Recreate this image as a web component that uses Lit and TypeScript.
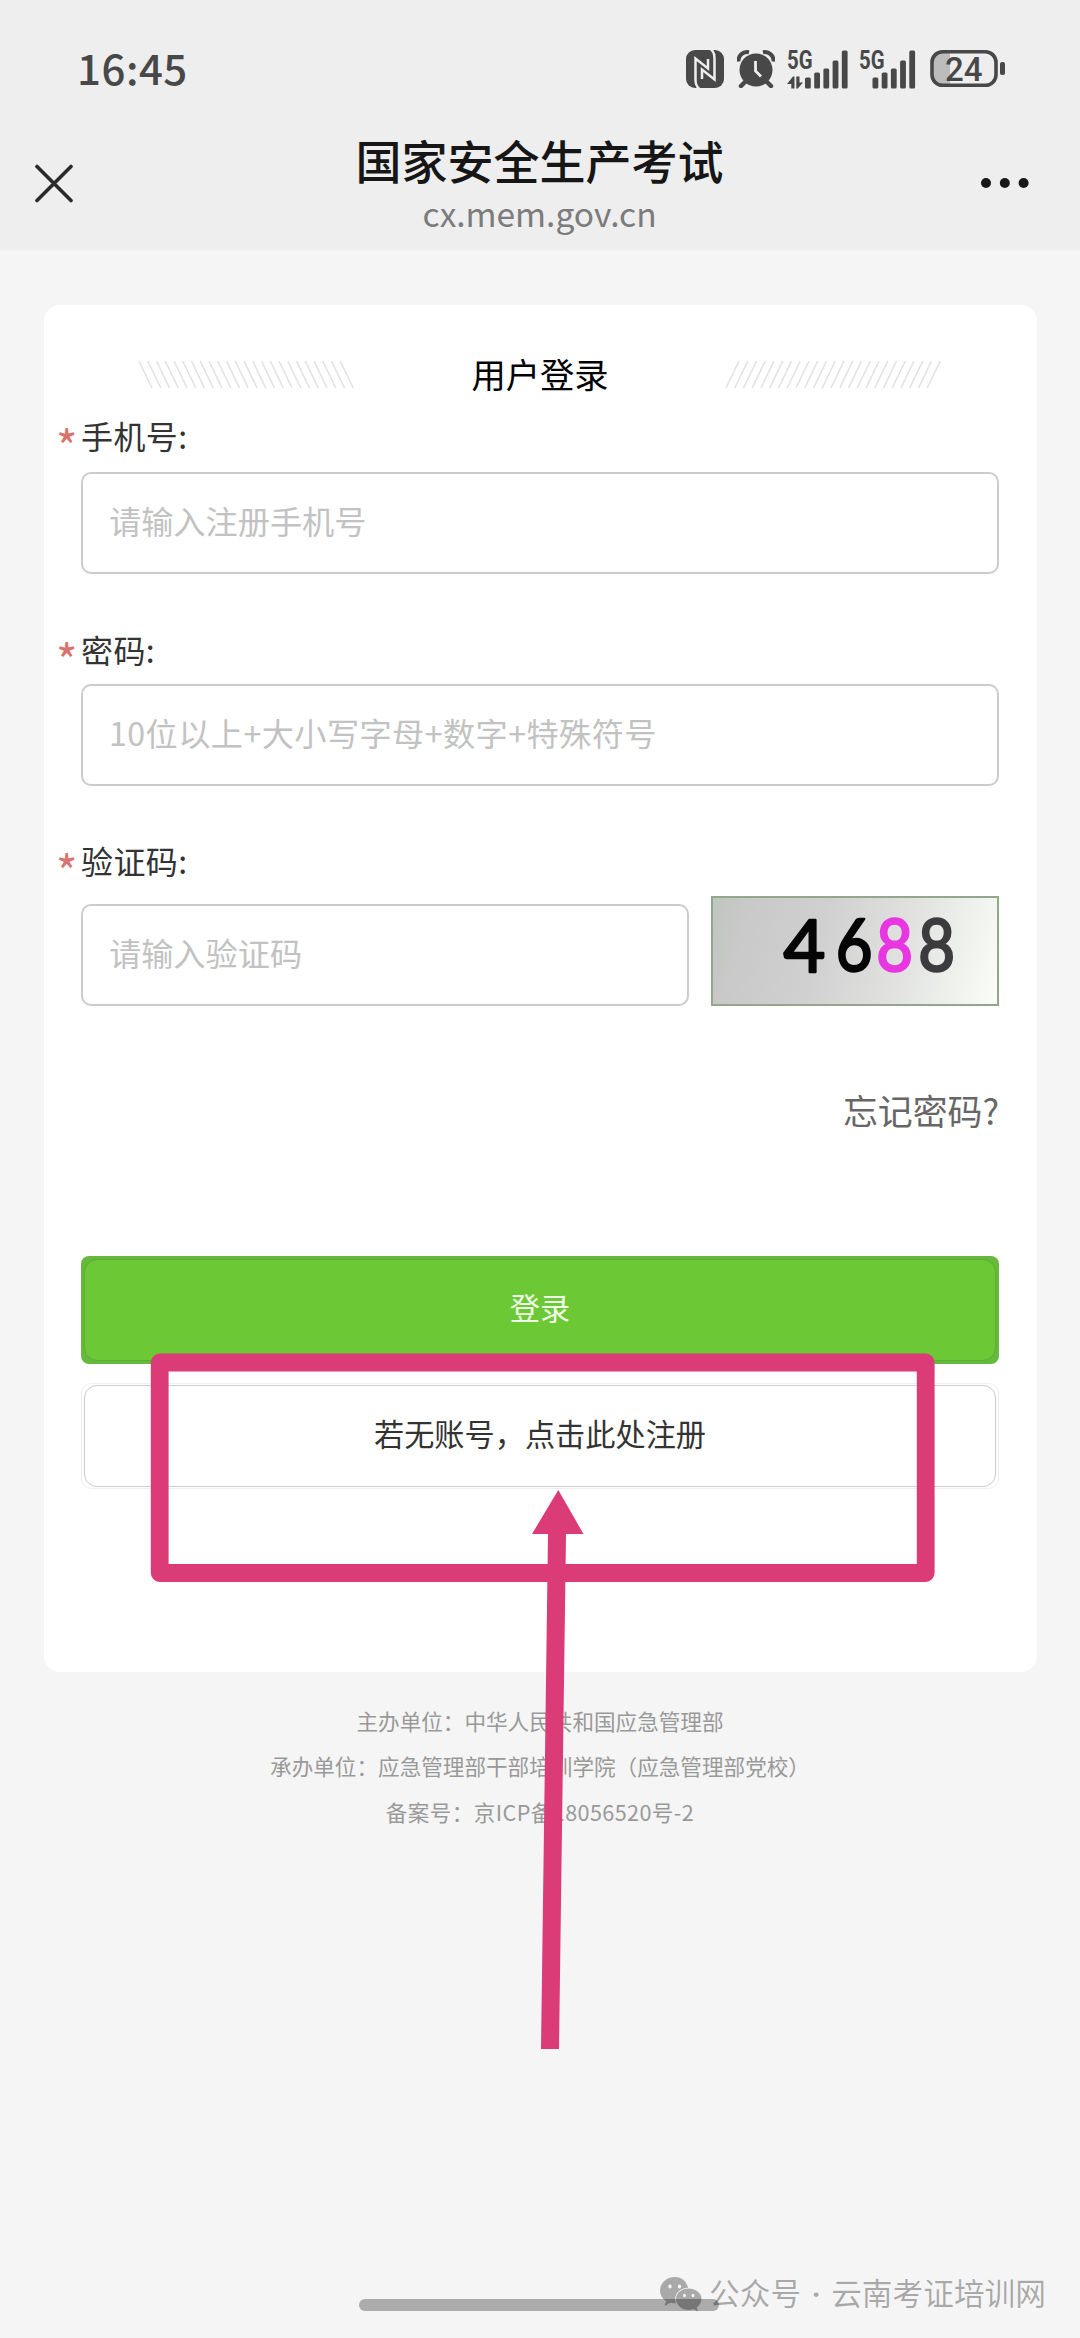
import { LitElement, html, css, svg } from "lit";
import { customElement, property } from "lit/decorators.js";

const BAR_TOPS = [27, 22, 18, 10, 0];

@customElement("signal-bars")
class SignalBars extends LitElement {
  @property({ type: Boolean }) traffic = false;

  static styles = css`
    :host { display: block; }
    .signal { display: block; overflow: visible; }
    .tag { font: 700 25px Roboto, sans-serif; fill: #484848; }
  `;

  render() {
    return html`<svg class="signal" width="62" height="40" viewBox="0 0 62 40" fill="#484848">
      <text class="tag" x="0" y="19" textLength="25.500" lengthAdjust="spacingAndGlyphs">5G</text>
      ${this.traffic
        ? svg`<path d="M0 34 6 26.500H7.500V38.500H4.300V34zM9.300 26.500h3.200V32.500H16L10.800 38.500H9.300z" />`
        : null}
      ${BAR_TOPS.map((top, i) => {
        const x = (this.traffic ? 18 : 13.5) + i * 9.2;
        return svg`<rect x=${x} y=${top + 0.5} width="5.800" height=${38 - top} rx="1.500" />`;
      })}
    </svg>`;
  }
}

@customElement("status-bar")
class StatusBar extends LitElement {
  static styles = css`
    :host { display: block; }
    .bar {
      display: flex; justify-content: space-between; align-items: flex-start;
      height: 100px; box-sizing: border-box; padding: 50px 74px 0 77px;
      font-family: "Noto Sans CJK SC", sans-serif; color: #484848;
    }
    .time { margin-top: -8px; font-size: 42px; font-weight: 500; line-height: 50px; letter-spacing: 0.5px; }
    .icons { display: flex; align-items: flex-start; }
    .nfc, .alarm, .battery { display: block; }
    .battery { overflow: visible; }
    .alarm { margin-left: 13px; }
    .sim { margin-left: 12px; }
    .sim2 { margin-left: 10px; }
    .battery { margin-left: 9px; }
    .level { font: 500 33px Roboto, sans-serif; fill: #484848; }
  `;

  render() {
    return html`<div class="bar">
      <span class="time">16:45</span>
      <div class="icons">
        <svg class="nfc" width="38" height="38" viewBox="0 0 38 38" fill="none">
          <rect width="38" height="38" rx="9" fill="#484848" />
          <path d="M13.500 39C10 36.500 9.500 34 9.500 30V8.500L22 18.500V9" stroke="#eee" stroke-width="2.500" />
          <path d="M24.500-1C28 1.500 28.500 4 28.500 8V29.500L16 19.500V29" stroke="#eee" stroke-width="2.500" />
        </svg>
        <svg class="alarm" width="38" height="38" viewBox="0 0 38 38" fill="none">
          <circle cx="19" cy="20" r="16.500" fill="#484848" />
          <path d="M1.500 11.500C1 6 6 1 12 2.200M36.500 11.500C37 6 32 1 26 2.200" stroke="#484848" stroke-width="4" />
          <path d="M8 32 4 36M30 32l4 4" stroke="#484848" stroke-width="4.500" stroke-linecap="round" />
          <path d="M18.500 11v10l5.500 5.500" stroke="#eee" stroke-width="2.800" />
        </svg>
        <signal-bars class="sim" traffic></signal-bars>
        <signal-bars class="sim2"></signal-bars>
        <svg class="battery" width="76" height="38" viewBox="0 0 76 38">
          <path d="M20 2H13A11 11 0 0 0 2 13V24A11 11 0 0 0 13 35H20z" fill="#bcbcbc" />
          <rect x="2" y="1.800" width="64" height="33.500" rx="10.500" fill="none" stroke="#484848" stroke-width="3.600" />
          <rect x="70" y="12" width="5" height="13" rx="2" fill="#484848" />
          <text class="level" x="15" y="31">24</text>
        </svg>
      </div>
    </div>`;
  }
}

@customElement("form-label")
class FormLabel extends LitElement {
  @property() text = "";

  static styles = css`
    :host { display: block; }
    .label {
      display: flex; height: 40px; line-height: 40px; margin-left: -25px;
      font-family: "Noto Sans CJK SC", sans-serif; font-size: 32px; letter-spacing: 0.4px; color: #333;
    }
    .star { width: 25px; color: #d9736e; font-size: 46px; line-height: 61px; letter-spacing: 0; }
  `;

  render() {
    return html`<div class="label"><span class="star">*</span><span>${this.text}</span></div>`;
  }
}

@customElement("app-root")
class AppRoot extends LitElement {
  static styles = css`
    :host { display: block; }
    .screen {
      position: relative; box-sizing: border-box; width: 1080px; height: 2338px;
      overflow: hidden; background: #f5f5f5;
      font-family: "Noto Sans CJK SC", sans-serif;
    }
    .header { height: 250px; background: #eee; }
    .nav {
      display: grid; grid-template-columns: 38px 1fr 50px; height: 150px;
      padding: 0 49px 0 35px;
    }
    .close { margin-top: 64px; }
    .more { margin-top: 77px; }
    .titles { display: flex; flex-direction: column; align-items: center; padding-left: 25px; }
    .title { margin-top: 31px; font-size: 46px; line-height: 56px; font-weight: 500; color: #161616; }
    .domain { margin-top: 6px; font-size: 33.5px; line-height: 40px; color: #7b7b7b; }
    .card {
      box-sizing: border-box; height: 1367px; margin: 55px 43px 0 44px;
      padding: 38px 38px 0 37px; border-radius: 16px; background: #fff;
    }
    .heading {
      display: flex; align-items: center; justify-content: space-between;
      height: 60px; padding: 0 57px; margin-bottom: 12px;
    }
    .heading-text { font-size: 34.3px; line-height: 60px; color: #000; }
    .hatch { margin-top: 2px; }
    .field {
      box-sizing: border-box; height: 102px; padding: 0 26px; border: 2px solid #ccc;
      border-radius: 10px; font-size: 32.2px; line-height: 93px; color: #c2c2c2; white-space: nowrap;
    }
    .phone { margin: 17px 0 55px; }
    .password { margin: 15px 0 54px; letter-spacing: 0.42px; }
    .code-row {
      display: grid; grid-template-columns: 608px 288px; column-gap: 22px;
      align-items: end; margin-top: 16px;
    }
    .captcha {
      box-sizing: border-box; height: 110px; border: 2px solid #93a78c;
      background: linear-gradient(105deg, #c0c5be 0%, #c9c9c9 12%, #d0d0d0 38%, #e0e1df 64%, #fafdf8 100%);
    }
    .digits { display: block; font: 400 72px Lato, sans-serif; stroke-width: 2.5px; stroke-linejoin: round; }
    .forgot { margin-top: 84px; height: 40px; line-height: 40px; text-align: right; font-size: 34.9px; color: #666; }
    .button { box-sizing: border-box; display: flex; justify-content: center; font-size: 30.2px; }
    .button-inner {
      box-sizing: border-box; width: 100%; border: 1px solid #ccc; border-radius: 13px;
      text-align: center;
    }
    .login {
      height: 108px; margin-top: 126px; padding: 3px; border-radius: 8px;
      background: #66b93c; color: #f0fde6;
    }
    .login .button-inner { border-color: #5cad34; background: #6cc935; line-height: 94px; }
    .register {
      height: 106px; margin-top: 19px; padding: 1px 2px; border: 1px solid #efefef; border-radius: 10px;
      color: #333;
    }
    .register .button-inner { line-height: 95px; }
    .footer { margin-top: 26px; text-align: center; font-size: 21.6px; line-height: 45.3px; color: #999; }
    .icp { letter-spacing: 0.4px; }
    .markup { position: absolute; left: 0; top: 0; pointer-events: none; }
    .home {
      position: absolute; left: 359px; top: 2299px; width: 360px; height: 12px;
      border-radius: 6px; background: #acacac;
    }
    .account {
      position: absolute; right: 34px; top: 2270px; height: 44px; display: flex;
      align-items: flex-start; color: rgba(0, 0, 0, 0.31); font-size: 30.7px; line-height: 44px;
    }
    .dot { width: 30px; text-align: center; font-family: Roboto, sans-serif; font-weight: 700; line-height: 49px; }
    .logo { margin: 7px 6px 0 0; }
  `;

  private hatch(mirrored: boolean) {
    const lines = Array.from({ length: 24 }, (_, i) => {
      const x = 1 + i * 8.75;
      return mirrored ? `M${x + 13} 1L${x} 28` : `M${x} 1L${x + 13} 28`;
    }).join("");
    return html`<svg class="hatch" width="217" height="29" viewBox="0 0 217 29">
      <path d=${lines} stroke="#e2e2e2" stroke-width="1.600" />
    </svg>`;
  }

  render() {
    return html`<div class="screen">
      <div class="header">
        <status-bar></status-bar>
        <div class="nav">
          <svg class="close" width="38" height="40" viewBox="0 0 38 40">
            <path d="M2 2.500 36 36.500M36 2.500 2 36.500" stroke="#2a2a2a" stroke-width="3.600" stroke-linecap="round" />
          </svg>
          <div class="titles">
            <span class="title">国家安全生产考试</span>
            <span class="domain">cx.mem.gov.cn</span>
          </div>
          <svg class="more" width="50" height="12" viewBox="0 0 50 12" fill="#181818">
            <circle cx="5" cy="6" r="5" /><circle cx="23.800" cy="6" r="5" /><circle cx="42.600" cy="6" r="5" />
          </svg>
        </div>
      </div>

      <div class="card">
        <div class="heading">
          ${this.hatch(false)}<span class="heading-text">用户登录</span>${this.hatch(true)}
        </div>
        <form-label text="手机号:"></form-label>
        <div class="field phone">请输入注册手机号</div>
        <form-label text="密码:"></form-label>
        <div class="field password">10位以上+大小写字母+数字+特殊符号</div>
        <form-label text="验证码:"></form-label>
        <div class="code-row">
          <div class="field">请输入验证码</div>
          <div class="captcha">
            <svg class="digits" width="284" height="106" viewBox="0 0 284 106" text-anchor="middle">
              <text x="91.500" y="73.500" fill="#050505" stroke="#050505">4</text>
              <g transform="scale(0.88 1)">
                <text x="160.500" y="73.500" fill="#050505" stroke="#050505">6</text>
                <text x="206.500" y="73.500" fill="#e836e2" stroke="#e836e2">8</text>
                <text x="254" y="73.500" fill="#3c3c3e" stroke="#3c3c3e">8</text>
              </g>
            </svg>
          </div>
        </div>
        <div class="forgot">忘记密码?</div>
        <div class="button login"><div class="button-inner">登录</div></div>
        <div class="button register"><div class="button-inner">若无账号，点击此处注册</div></div>
      </div>

      <div class="footer">
        <div>主办单位：中华人民共和国应急管理部</div>
        <div>承办单位：应急管理部干部培训学院（应急管理部党校）</div>
        <div class="icp">备案号：京ICP备18056520号-2</div>
      </div>

      <svg class="markup" width="1080" height="2338" viewBox="0 0 1080 2338">
        <rect x="159.700" y="1362.500" width="766" height="210.500" fill="none" stroke="#db3b76" stroke-width="17.800" stroke-linejoin="round" />
        <path d="M558.300 1490 583.500 1534H566L559 2049H541L548 1534H532z" fill="#db3b76" />
      </svg>
      <div class="home"></div>
      <div class="account">
        <svg class="logo" width="43" height="35" viewBox="0 0 43 35">
          <path d="M15 0C6.500 0 0 6 0 13.500c0 4.500 2.300 8 6 10.500l-1.500 5 6-3.200c1.500.4 3 .5 4.500.5h.8C15.500 25 15.200 23.500 15.200 22c0-6 5.300-11.200 12.800-11.300C26.800 4.500 21.500 0 15 0z" fill="#000" fill-opacity="0.310" />
          <path d="M28.500 11.500C21.500 11.500 16 16 16 22s5.500 11 12.500 11c1.800 0 3.400-.3 5-.9l4.500 2.400-1.200-4C39.500 28.500 41.500 25.500 41.500 22c0-6-6-10.500-13-10.500z" fill="#000" fill-opacity="0.310" />
          <g fill="#f5f5f5"><ellipse cx="10" cy="9.500" rx="1.700" ry="2.100" /><ellipse cx="19.500" cy="9.500" rx="1.700" ry="2.100" /><ellipse cx="24.500" cy="18.500" rx="1.400" ry="1.800" /><ellipse cx="33" cy="18.500" rx="1.400" ry="1.800" /></g>
        </svg>
        <span>公众号</span><span class="dot">·</span><span>云南考证培训网</span>
      </div>
    </div>`;
  }
}
